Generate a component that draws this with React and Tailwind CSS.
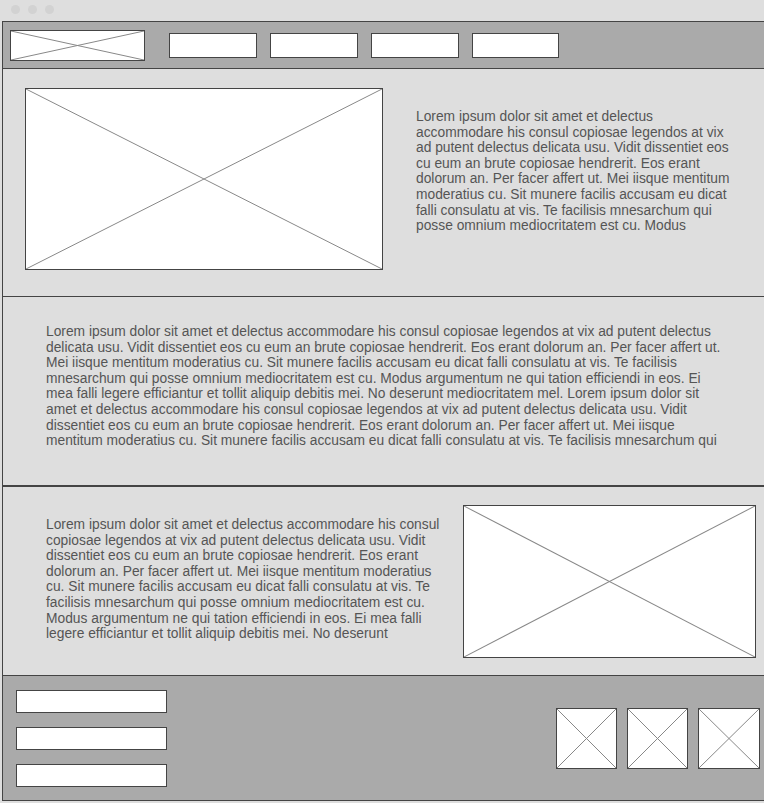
import React from "react";

const LOREM_SHORT =
  "Lorem ipsum dolor sit amet et delectus accommodare his consul copiosae legendos at vix ad putent delectus delicata usu. Vidit dissentiet eos cu eum an brute copiosae hendrerit. Eos erant dolorum an. Per facer affert ut. Mei iisque mentitum moderatius cu. Sit munere facilis accusam eu dicat falli consulatu at vis. Te facilisis mnesarchum qui posse omnium mediocritatem est cu. Modus";

const LOREM_LONG =
  "Lorem ipsum dolor sit amet et delectus accommodare his consul copiosae legendos at vix ad putent delectus delicata usu. Vidit dissentiet eos cu eum an brute copiosae hendrerit. Eos erant dolorum an. Per facer affert ut. Mei iisque mentitum moderatius cu. Sit munere facilis accusam eu dicat falli consulatu at vis. Te facilisis mnesarchum qui posse omnium mediocritatem est cu. Modus argumentum ne qui tation efficiendi in eos. Ei mea falli legere efficiantur et tollit aliquip debitis mei. No deserunt mediocritatem mel. Lorem ipsum dolor sit amet et delectus accommodare his consul copiosae legendos at vix ad putent delectus delicata usu. Vidit dissentiet eos cu eum an brute copiosae hendrerit. Eos erant dolorum an. Per facer affert ut. Mei iisque mentitum moderatius cu. Sit munere facilis accusam eu dicat falli consulatu at vis. Te facilisis mnesarchum qui";

const LOREM_MID =
  "Lorem ipsum dolor sit amet et delectus accommodare his consul copiosae legendos at vix ad putent delectus delicata usu. Vidit dissentiet eos cu eum an brute copiosae hendrerit. Eos erant dolorum an. Per facer affert ut. Mei iisque mentitum moderatius cu. Sit munere facilis accusam eu dicat falli consulatu at vis. Te facilisis mnesarchum qui posse omnium mediocritatem est cu. Modus argumentum ne qui tation efficiendi in eos. Ei mea falli legere efficiantur et tollit aliquip debitis mei. No deserunt";

// Wireframe image placeholder: white box with a cross
function Placeholder({ className }) {
  return (
    <div className={`border border-[#444] bg-white shrink-0 ${className}`}>
      <svg className="block w-full h-full" viewBox="0 0 100 100" preserveAspectRatio="none">
        <line x1="0" y1="0" x2="100" y2="100" stroke="#888" strokeWidth="1" vectorEffect="non-scaling-stroke" />
        <line x1="100" y1="0" x2="0" y2="100" stroke="#888" strokeWidth="1" vectorEffect="non-scaling-stroke" />
      </svg>
    </div>
  );
}

function Box({ className }) {
  return <div className={`border border-[#444] bg-white shrink-0 ${className}`} />;
}

export default function App() {
  return (
    <div
      className="w-[764px] h-[803px] overflow-hidden bg-[#dedede] text-[13.8px] leading-[15.6px] text-[#555]"
      style={{ fontFamily: '"Liberation Sans", Arial, sans-serif' }}
    >
      {/* window chrome */}
      <div className="h-[21px] flex items-start gap-[8px] pl-[11px] pt-[5px]">
        <span className="w-[9px] h-[9px] rounded-full bg-[#d2d2d2]" />
        <span className="w-[9px] h-[9px] rounded-full bg-[#d2d2d2]" />
        <span className="w-[9px] h-[9px] rounded-full bg-[#d2d2d2]" />
      </div>

      <div className="ml-[2px] w-[780px] border border-[#444]">
        {/* header */}
        <div className="h-[47px] bg-[#aaaaaa] border-b border-[#444] flex items-center pl-[7px]">
          <Placeholder className="w-[135px] h-[31px]" />
          <div className="flex gap-[13px] ml-[24px]">
            <Box className="w-[88px] h-[25px]" />
            <Box className="w-[88px] h-[25px]" />
            <Box className="w-[88px] h-[25px]" />
            <Box className="w-[87px] h-[25px]" />
          </div>
        </div>

        {/* hero */}
        <div className="h-[228px] border-b border-[#444] flex items-start pl-[22px] pt-[19px]">
          <Placeholder className="w-[358px] h-[182px]" />
          <p className="ml-[33px] mt-[21px] w-[318px]">{LOREM_SHORT}</p>
        </div>

        {/* text block */}
        <div className="h-[190px] border-b-2 border-[#444] pl-[43px] pt-[27px]">
          <p className="w-[680px]">{LOREM_LONG}</p>
        </div>

        {/* text + image */}
        <div className="h-[189px] border-b border-[#444] flex items-start pl-[43px]">
          <p className="w-[400px] mt-[30px]">{LOREM_MID}</p>
          <Placeholder className="ml-[17px] mt-[18px] w-[293px] h-[153px]" />
        </div>

        {/* footer */}
        <div className="h-[124px] bg-[#aaaaaa] flex items-center justify-between pl-[13px] pr-[21px]">
          <div className="flex flex-col gap-[14px]">
            <Box className="w-[151px] h-[23px]" />
            <Box className="w-[151px] h-[23px]" />
            <Box className="w-[151px] h-[23px]" />
          </div>
          <div className="flex gap-[10px]">
            <Placeholder className="w-[61px] h-[61px]" />
            <Placeholder className="w-[61px] h-[61px]" />
            <Placeholder className="w-[62px] h-[61px]" />
          </div>
        </div>
      </div>
    </div>
  );
}
